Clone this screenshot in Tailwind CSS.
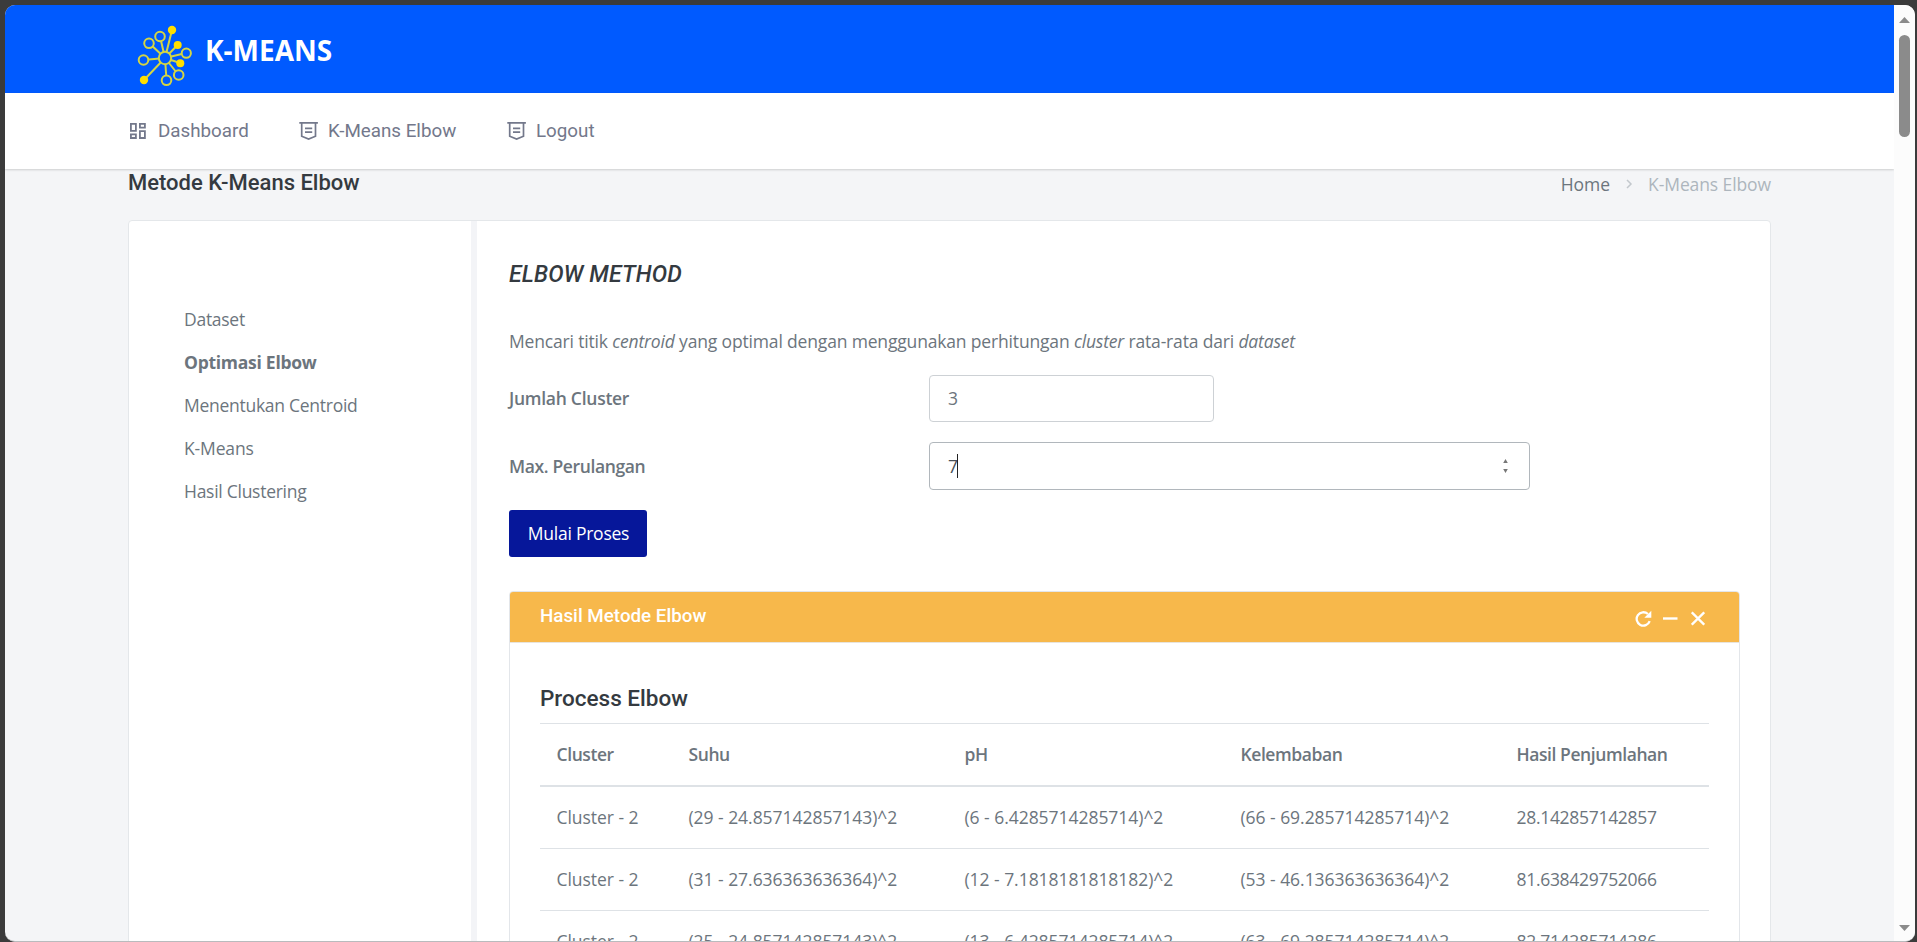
<!DOCTYPE html>
<html lang="id">
<head>
<meta charset="utf-8">
<title>K-Means Elbow</title>
<script src="https://cdn.jsdelivr.net/npm/@tailwindcss/browser@4"></script>
</head>
<body class="h-[942px] w-[1917px] overflow-hidden bg-[#3b3b3b] pt-[5px] pl-[5px] font-['Open_Sans',sans-serif] text-[17.5px] text-[#6c757d]">
<div class="flex h-[937px] w-[1910px] overflow-hidden rounded-[10px] border-b border-[#b9bbbd] bg-[#f4f5f7]">
  <div class="flex h-full w-[1889px] flex-col overflow-hidden">
    <header class="flex h-[88px] shrink-0 items-center bg-[#005aff] pl-[131px]">
      <svg class="mt-[16px] h-[64px] w-[58px]" viewBox="136 25 58 64" fill="none" stroke="#d3d544" stroke-width="2">
        <path d="M165 58L172 30M165 58L177.500 45M165 58L180 63M165 58L144 80M165 58L160 36.500M165 58L149 43M165 58L143.500 60M165 58L186 53M165 58L178.500 75M165 58L166.500 80"/>
        <g fill="#005aff">
          <circle cx="165" cy="58" r="6.200"/>
          <circle cx="160" cy="36.500" r="4.800"/>
          <circle cx="149" cy="43.300" r="4.800"/>
          <circle cx="143.500" cy="60" r="4.800"/>
          <circle cx="186.300" cy="53.200" r="4.600"/>
          <circle cx="178.700" cy="75" r="4.800"/>
          <circle cx="166.500" cy="80.300" r="4.800"/>
        </g>
        <g fill="#ffdf00" stroke="none">
          <circle cx="172" cy="30" r="4.200"/>
          <circle cx="177.700" cy="45" r="4"/>
          <circle cx="180.300" cy="63.200" r="4"/>
          <circle cx="144" cy="80" r="4.200"/>
        </g>
      </svg>
      <span class="mt-px ml-[11px] text-[28px] leading-9 font-bold text-white">K-MEANS</span>
    </header>
    <nav class="relative z-10 flex h-[76px] shrink-0 items-center bg-white pl-[124px] font-[Roboto,sans-serif] text-[18.8px] text-[#73788b] shadow-[0_1px_2px_rgba(0,0,0,0.16)]">
      <a class="flex w-[169px] items-center gap-[10px]">
        <svg class="h-[18px] w-[19px]" viewBox="129 122 19 18" fill="none" stroke="currentColor" stroke-width="1.800"><path d="M130.900 123.900h5v7h-5zM139.900 123.900h5v3.700h-5zM130.900 134.400h5v3.600h-5zM139.900 131.200h5v6.800h-5z"/></svg>
        Dashboard
      </a>
      <a class="flex w-[208px] items-center gap-[9px] pl-px">
        <svg class="h-[20px] w-[20px]" viewBox="299 121 20 20" fill="none" stroke="currentColor" stroke-width="1.700"><path d="M299.300 122.900h18.600M301.700 123v13.200l6.900 2.900l6.900-2.900V123M305 128.300h7.200M305 132.200h7.200"/></svg>
        K-Means Elbow
      </a>
      <a class="flex items-center gap-[9px] pl-px">
        <svg class="h-[20px] w-[20px]" viewBox="299 121 20 20" fill="none" stroke="currentColor" stroke-width="1.700"><path d="M299.300 122.900h18.600M301.700 123v13.200l6.900 2.900l6.900-2.900V123M305 128.300h7.200M305 132.200h7.200"/></svg>
        Logout
      </a>
    </nav>
    <main class="w-[1767px] pl-[123px]">
      <div class="flex h-[51px] justify-between">
        <h1 class="pt-px font-[Roboto,sans-serif] text-[22px] leading-[25px] font-medium text-[#343a40]">Metode K-Means Elbow</h1>
        <div class="flex h-[30px] items-center pr-px">
          <span>Home</span>
          <svg class="mr-[15px] ml-[16px] h-[10px] w-[7px]" viewBox="0 0 7 10" fill="none" stroke="#c3c8cd" stroke-width="1.500"><path d="M1 1l4 4l-4 4"/></svg>
          <span class="tracking-[-0.1px] text-[#adb5bd]">K-Means Elbow</span>
        </div>
      </div>
      <div class="flex h-[900px] w-[1643px] rounded-[4px] border border-[#e4e7ea] bg-white">
        <aside class="flex h-full w-[348px] shrink-0 flex-col border-r-[6px] border-[#f3f4f7] pt-[76.500px] pl-[55px] leading-[43.2px] tracking-[-0.27px]">
          <a>Dataset</a>
          <a class="font-bold">Optimasi Elbow</a>
          <a>Menentukan Centroid</a>
          <a class="tracking-[-0.15px]">K-Means</a>
          <a>Hasil Clustering</a>
        </aside>
        <section class="w-[1263px] pl-[32px]">
          <h2 class="mt-[40px] font-[Roboto,sans-serif] text-[23px] leading-[28px] font-medium tracking-[0.150px] text-[#343a40] italic">ELBOW METHOD</h2>
          <p class="mt-[37px] leading-[30px] tracking-[-0.165px]">Mencari titik <i>centroid</i> yang optimal dengan menggunakan perhitungan <i>cluster</i> rata-rata dari <i>dataset</i></p>
          <div class="mt-[19px] flex h-[47px] items-center">
            <label class="w-[420px] font-semibold tracking-[-0.27px]">Jumlah Cluster</label>
            <div class="flex h-[47px] w-[285px] items-center rounded-[4px] border border-[#cdd1d5] pl-[18px]">3</div>
          </div>
          <div class="mt-[20px] flex h-[48px] items-center">
            <label class="w-[420px] font-semibold tracking-[-0.37px]">Max. Perulangan</label>
            <div class="flex h-[48px] w-[601px] items-center rounded-[4px] border border-[#b1b7bc] pr-[20px] pl-[18px] text-[#495057]">
              <span class="flex items-center">7<span class="-ml-px h-[24px] w-px bg-[#222]"></span></span>
              <svg class="ml-auto h-[14px] w-[7px]" viewBox="0 0 7 14" fill="#777"><path d="M1.200 4L3.500 0L5.800 4zM1.200 10L3.500 14L5.800 10z"/></svg>
            </div>
          </div>
          <button class="mt-[20px] flex h-[47px] w-[138px] items-center justify-center rounded-[3px] bg-[#06179a] pl-px tracking-[-0.25px] text-white">Mulai Proses</button>
          <div class="mt-[34px] h-[500px] w-[1231px] rounded-[4px] border border-[#e3e6ea] bg-white">
            <div class="flex h-[51px] items-center rounded-t-[3px] border-b border-[#e8e4dc] bg-[#f7b84b] pr-[34px] pl-[30px] text-white">
              <h3 class="mb-px font-[Roboto,sans-serif] text-[18.8px] font-medium">Hasil Metode Elbow</h3>
              <div class="mt-[3px] ml-auto flex items-center gap-[11px]">
                <svg class="h-[17px] w-[17px]" viewBox="0 0 17 17"><path d="M14.700 11.200A6.700 6.700 0 1 1 12.900 4" fill="none" stroke="#fff" stroke-width="2.300"/><path d="M16.300 .8v7h-7z" fill="#fff"/></svg>
                <svg class="h-[17px] w-[15px]" viewBox="0 0 15 17"><path d="M0 8.500h14.500" stroke="#fff" stroke-width="2.400"/></svg>
                <svg class="ml-[2px] h-[17px] w-[14px]" viewBox="0 0 14 17"><path d="M.8 2.300l12.400 12.400M13.200 2.300L.8 14.700" stroke="#fff" stroke-width="2.300"/></svg>
              </div>
            </div>
            <div class="px-[30px] pt-[41px]">
              <h4 class="h-[39px] font-[Roboto,sans-serif] text-[22.500px] leading-[28px] font-medium text-[#343a40]">Process Elbow</h4>
              <div class="w-[1169px] tracking-[-0.04px]">
                <div class="grid h-[64px] grid-cols-[132px_276px_276px_276px_209px] items-center border-t border-b-2 border-[#dee2e6] pl-[16.500px] font-semibold tracking-[-0.42px]">
                  <span>Cluster</span><span>Suhu</span><span>pH</span><span>Kelembaban</span><span>Hasil Penjumlahan</span>
                </div>
                <div class="grid h-[61px] grid-cols-[132px_276px_276px_276px_209px] items-center pl-[16.500px]">
                  <span>Cluster - 2</span><span>(29 - 24.857142857143)^2</span><span>(6 - 6.4285714285714)^2</span><span>(66 - 69.285714285714)^2</span><span class="tracking-[-0.3px]">28.142857142857</span>
                </div>
                <div class="grid h-[62px] grid-cols-[132px_276px_276px_276px_209px] items-center border-t border-[#dee2e6] pl-[16.500px]">
                  <span>Cluster - 2</span><span>(31 - 27.636363636364)^2</span><span>(12 - 7.1818181818182)^2</span><span>(53 - 46.136363636364)^2</span><span class="tracking-[-0.3px]">81.638429752066</span>
                </div>
                <div class="grid h-[62px] grid-cols-[132px_276px_276px_276px_209px] items-center border-t border-[#dee2e6] pl-[16.500px]">
                  <span>Cluster - 2</span><span>(25 - 24.857142857143)^2</span><span>(13 - 6.4285714285714)^2</span><span>(63 - 69.285714285714)^2</span><span class="tracking-[-0.3px]">82.714285714286</span>
                </div>
              </div>
            </div>
          </div>
        </section>
      </div>
    </main>
  </div>
  <div class="flex h-full w-[21px] flex-col items-center bg-[#fcfcfc] pt-[12px] pb-[10px]">
    <svg class="h-[6px] w-[11px] shrink-0" viewBox="0 0 11 6"><path d="M0 6L5.500 0L11 6z" fill="#8b8b8b"/></svg>
    <div class="mt-[12px] h-[102px] w-[11px] rounded-full bg-[#8b8b8b]"></div>
    <svg class="mt-auto h-[6px] w-[11px] shrink-0" viewBox="0 0 11 6"><path d="M0 0h11L5.500 6z" fill="#8b8b8b"/></svg>
  </div>
</div>
</body>
</html>
